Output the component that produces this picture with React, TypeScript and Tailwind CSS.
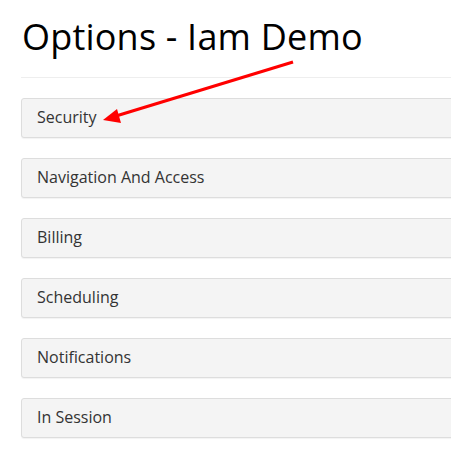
const sections = [
  "Security",
  "Navigation And Access",
  "Billing",
  "Scheduling",
  "Notifications",
  "In Session",
]

export default function App() {
  return (
    <div className="relative h-[452px] w-[451px] overflow-hidden bg-white font-['Open_Sans',sans-serif]">
      <div className="w-[640px] pl-[21px] pt-[15px]">
        <h1 className="text-[36px] leading-[44px] font-normal tracking-[0.2px] text-black pl-[1px]">Options - Iam Demo</h1>
        <div className="mt-[18px] border-t border-[#eeeeee]" />
        <div className="mt-[20px] flex flex-col gap-[20px]">
          {sections.map((s) => (
            <div
              key={s}
              className="flex h-[40px] items-center rounded-[3px] border border-[#dddddd] bg-[#f4f4f4] pl-[15px] pb-[2px] text-[16px] text-[#333333] shadow-[0_1px_1px_rgba(0,0,0,0.05)]"
            >
              {s}
            </div>
          ))}
        </div>
      </div>

      {/* annotation arrow */}
      <svg className="pointer-events-none absolute inset-0" width="451" height="452">
        <line x1="293" y1="62" x2="116" y2="116" stroke="#ff0000" strokeWidth="3" />
        <polygon points="103,120 117,109 121,123" fill="#ff0000" />
      </svg>
    </div>
  )
}
